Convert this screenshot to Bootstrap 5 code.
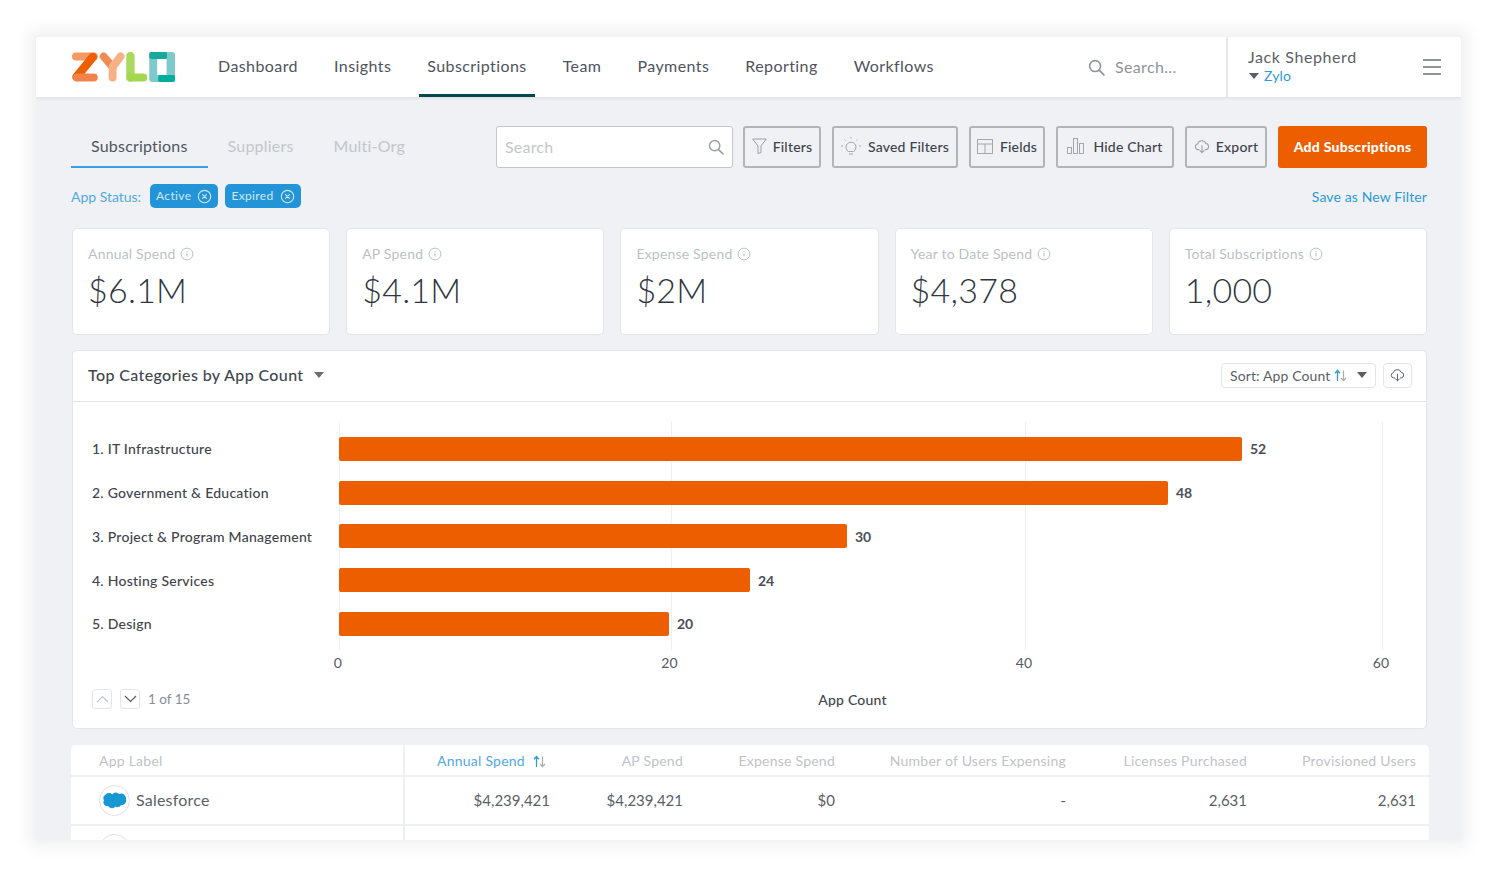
<!DOCTYPE html>
<html lang="en">
<head>
<meta charset="utf-8">
<title>Zylo Subscriptions</title>
<link rel="stylesheet" href="https://cdn.jsdelivr.net/npm/bootstrap@5.3.0/dist/css/bootstrap.min.css">
<style>
html,body{height:876px;overflow:hidden}
body{background:#fff;font-family:Lato,"Liberation Sans",sans-serif;color:#4a4f57;padding:37px 36px 36px;letter-spacing:.2px}
.appwin{height:803px;background:#eff1f5;box-shadow:0 0 14px 10px rgba(0,0,0,.045),0 0 4px 2px rgba(0,0,0,.02);border-radius:3px;overflow:hidden}
.topbar{height:61px;background:#fff;border-bottom:1px solid #e2e4e7;box-shadow:0 1px 2px rgba(0,0,0,.06);padding:0}
.brandmark{width:103px;height:30px;margin-left:36px;margin-right:35px;display:block}
.topnav{gap:20px}
.topnav .nav-link{font-size:16px;color:#4f545b;padding:0 8px;height:60px;line-height:57px;border-bottom:3px solid transparent;letter-spacing:.42px}
.topnav .nav-link.active{color:#4f545b;border-bottom-color:#03474f}
.topsearch{margin-left:auto;color:#8f9398;font-size:16px;gap:10px;width:138px;letter-spacing:.35px}
.usermenu{height:60px;width:235px;border-left:2px solid #e6e7ea;padding:0 20px 2px 20px}
.username{font-size:16px;line-height:20px;margin-bottom:0;color:#5b5f66;letter-spacing:.6px}
.userorg{font-size:14px;line-height:18px;color:#2e9ad9;gap:5px;padding-left:1px}
.orgcaret{color:#5a5f66}
.menuicon{flex:none;margin-top:2px}
.contentpad{padding:28px 34px 0 35px}
.subtabs .nav-link{font-size:16px;color:#c3c6ca;padding:0 20px;height:42px;line-height:40px;letter-spacing:.2px}
.subtabs .nav-link.active{color:#50565e;border-bottom:2px solid #3a9fdc;background:none}
.searchbox{width:237px;height:42px;margin-left:auto;background:#fff;border:1px solid #c4c6ca;border-radius:3px;padding:0 8px;color:#c3c6ca;font-size:16px;margin-right:10px}
.searchglyph{color:#9b9ea3}
.toolbtn{height:42px;border:2px solid #b2b4b8;border-radius:3px;background:transparent;color:#3e434b;font-size:14px;font-weight:500;padding:0 0 2px;letter-spacing:.2px;display:flex;align-items:center;justify-content:center;gap:6px;margin-right:11px}
.btn-filters{width:78px}
.btn-saved{width:126px;gap:7px}
.btn-fields{width:76px;gap:7px}
.btn-hide{width:118px;gap:9px}
.btn-export{width:82px}
.cloudgrey{color:#9c9fa4}
.addbtn{height:42px;width:149px;background:#ec5e00;border:0;border-radius:3px;color:#fff;font-size:14px;font-weight:900;padding:0 0 2px;letter-spacing:.25px}
.filterline{height:24px;margin-top:16px;font-size:14px}
.filterlabel{color:#52a9e1;margin-right:9px;letter-spacing:-.02px}
.filterchip{background:#2394d8;color:#cfe8f7;font-size:12px;font-weight:400;height:24px;border-radius:5px;padding:0 6px;display:inline-flex;align-items:center;gap:6px;margin-right:7px;letter-spacing:.35px}
.savelink{margin-left:auto;color:#2e9ad9;text-decoration:none;font-size:14px;letter-spacing:.12px}
.statsrow{gap:16px;margin-top:20px;padding-left:1px}
.statcard{width:258.2px;height:107px;border:1px solid #e3e5e9;border-radius:5px;padding:15px 15px 0}
.statlabel{font-size:14px;color:#bcbfc4;line-height:20px;display:flex;align-items:center;gap:5px;letter-spacing:.2px}
.statvalue{font-size:34px;font-weight:300;line-height:46px;color:#2f3641;margin-top:3px;letter-spacing:.25px}
.chartpanel{height:379px;margin:15px 0 16px 1px;border:1px solid #e3e5e9;border-radius:5px;background:#fff}
.panelhead{height:51px;padding:0 14px 2px 15px;background:#fff;border-bottom:1px solid #e3e5e9}
.paneltitle{font-size:16px;color:#41464e;font-weight:500;letter-spacing:.38px}
.titlecaret{color:#6a6e74;margin-left:10px}
.sortpick{height:25px;width:155px;border:1px solid #e2e4e7;border-radius:4px;font-size:14px;color:#5a5f66;padding:0 8px;margin-left:auto;margin-right:7px;background:#fff;letter-spacing:.12px}
.sortcaret{color:#5a5f66}
.cloudpick{height:25px;width:29px;border:1px solid #e2e4e7;border-radius:4px;color:#5f6369}
.plotwrap{position:relative;margin:19px 0 0 266px;width:1027px;padding-top:6px;height:229px}
.gridline{position:absolute;top:0;bottom:0;width:1px;background:#eef0f2}
.barline{height:43.75px;position:relative;margin-left:-266px}
.barname{width:266px;padding-left:19px;font-size:14px;font-weight:500;color:#3f444c;letter-spacing:.25px}
.barfill{height:24px;background:#ec5e00;border-radius:2px;position:relative}
.barnum{font-size:14px;font-weight:700;color:#4a4f57;margin-left:8px;letter-spacing:0}
.ticksrow{position:relative;margin-left:265px;width:1027px;height:26px}
.ticktext{position:absolute;top:2px;transform:translateX(-50%);font-size:14px;color:#54595f}
.chartfoot{margin-top:11px;height:24px}
.pagerside{width:266px;padding-left:19px;gap:8px;font-size:13.5px;color:#8a8e94;letter-spacing:0}
.pagerbtn{width:20px;height:20px;border:1px solid #e3e5e8;border-radius:3px}
.axisname{width:1027px;text-align:center;font-size:14px;font-weight:500;color:#41464e}
.tablewrap{width:1358px;background:#fff;border-radius:5px 5px 0 0}
.datatable{table-layout:fixed;width:1358px;margin:0;--bs-table-bg:transparent}
.datatable th{height:31px;padding:0 13px;font-size:14px;font-weight:400;color:#c0c3c8;text-align:right;vertical-align:middle;border-bottom:2px solid #eef0f2;white-space:nowrap;letter-spacing:.24px}
.datatable td{height:49px;padding:0 13px 1px;font-size:15px;color:#5a5f66;text-align:right;vertical-align:middle;border-bottom:2px solid #eef0f2;white-space:nowrap;letter-spacing:0}
.datatable .namecol{text-align:left;border-right:2px solid #eef0f2;padding-left:28px}
.datatable td.namecol{font-size:16px;letter-spacing:.2px}
.datatable th.sortcol{color:#52a9e1;text-align:left;padding-left:32px}
.namewrap{gap:6px}
.applogo{width:31px;height:31px;border:1px solid #dfe1e4;border-radius:50%}
</style>
</head>
<body>
<svg width="0" height="0" class="d-none" aria-hidden="true">
  <symbol id="i-info" viewBox="0 0 14 14"><circle cx="7" cy="7" r="5.9" fill="none" stroke="currentColor" stroke-width="1"/><path d="M7 6.2v3.4M7 4.2v1" stroke="currentColor" stroke-width="1.1" fill="none"/></symbol>
  <symbol id="i-cloud" viewBox="0 0 18 16"><path d="M5.5 11.5H4.4A3.2 3.2 0 0 1 4 5.2 4.9 4.9 0 0 1 13.3 4.6 3.5 3.5 0 0 1 13.6 11.5H12.5" fill="none" stroke="currentColor" stroke-width="1.2" stroke-linecap="round"/><path d="M9 7v8M6.6 12.6 9 15l2.4-2.4" fill="none" stroke="currentColor" stroke-width="1.2" stroke-linecap="round" stroke-linejoin="round"/></symbol>
  <symbol id="i-search" viewBox="0 0 18 18"><circle cx="7.5" cy="7.5" r="5.8" fill="none" stroke="currentColor" stroke-width="1.7"/><path d="m11.8 11.8 5 5" stroke="currentColor" stroke-width="1.9" stroke-linecap="round"/></symbol>
  <symbol id="i-x" viewBox="0 0 16 16"><circle cx="8" cy="8" r="6.6" fill="none" stroke="currentColor" stroke-width="1.2"/><path d="m5.9 5.9 4.2 4.2m0-4.2-4.2 4.2" stroke="currentColor" stroke-width="1.2" stroke-linecap="round"/></symbol>
  <symbol id="i-caret" viewBox="0 0 10 6"><path d="M0 0h10L5 6z" fill="currentColor"/></symbol>
  <symbol id="i-sort" viewBox="0 0 13 13"><path d="M3.5 12V2M1 4.2 3.5 1.5 6 4.2" fill="none" stroke="#2e9ad9" stroke-width="1.3"/><path d="M9.5 1.5v10M7 9 9.5 11.6 12 9" fill="none" stroke="#a9adb2" stroke-width="1.2"/></symbol>
</svg>

<div class="appwin">
  <nav class="navbar navbar-expand topbar flex-nowrap align-items-center">
    <svg class="brandmark" viewBox="0 0 104 30" preserveAspectRatio="none" role="img" aria-label="Zylo logo">
      <path d="M4 4.500H22" stroke="#f49a62" stroke-width="8" stroke-linecap="round" fill="none"/>
      <path d="M21 5 4.500 25" stroke="#ed5f00" stroke-width="8.500" stroke-linecap="round" fill="none"/>
      <path d="M5 25.500H22" stroke="#f2824a" stroke-width="8" stroke-linecap="round" fill="none"/>
      <path d="M32 4.500 41 15" stroke="#f08a56" stroke-width="8" stroke-linecap="round" fill="none"/>
      <path d="M49 4.500 41 15V25.500" stroke="#f8b184" stroke-width="8" stroke-linecap="round" stroke-linejoin="round" fill="none"/>
      <path d="M59 4V25.500" stroke="#abd95c" stroke-width="8.500" stroke-linecap="round" fill="none"/>
      <path d="M59 25.500H72" stroke="#a3d74e" stroke-width="8" stroke-linecap="round" fill="none"/>
      <rect x="78" y="0" width="26" height="30" rx="3" fill="#7ecaca"/>
      <rect x="78" y="0" width="18" height="7" rx="2" fill="#16a99c"/>
      <rect x="87" y="23" width="17" height="7" rx="2" fill="#00ae9d"/>
      <rect x="86" y="7" width="9.500" height="16" fill="#fff"/>
    </svg>
    <div class="navbar-nav topnav">
      <a class="nav-link" href="#">Dashboard</a>
      <a class="nav-link" href="#">Insights</a>
      <a class="nav-link active" href="#">Subscriptions</a>
      <a class="nav-link" href="#">Team</a>
      <a class="nav-link" href="#">Payments</a>
      <a class="nav-link" href="#">Reporting</a>
      <a class="nav-link" href="#">Workflows</a>
    </div>
    <div class="d-flex align-items-center topsearch">
      <svg width="17" height="17"><use href="#i-search"/></svg><span>Search...</span>
    </div>
    <div class="d-flex align-items-center usermenu">
      <div class="flex-grow-1">
        <div class="username">Jack Shepherd</div>
        <div class="userorg d-flex align-items-center"><svg width="10" height="6" class="orgcaret"><use href="#i-caret"/></svg><span>Zylo</span></div>
      </div>
      <svg class="menuicon" width="18" height="16" viewBox="0 0 18 16" aria-hidden="true"><path d="M0 1h18M0 8h18M0 15h18" stroke="#6c7076" stroke-width="1.700"/></svg>
    </div>
  </nav>

  <div class="contentpad">
    <div class="d-flex align-items-start">
      <ul class="nav subtabs">
        <li class="nav-item"><a class="nav-link active" href="#">Subscriptions</a></li>
        <li class="nav-item"><a class="nav-link" href="#">Suppliers</a></li>
        <li class="nav-item"><a class="nav-link" href="#">Multi-Org</a></li>
      </ul>
      <div class="d-flex align-items-center searchbox">
        <span class="flex-grow-1">Search</span>
        <svg width="16" height="16" class="searchglyph"><use href="#i-search"/></svg>
      </div>
      <button class="btn toolbtn btn-filters" type="button"><svg width="15" height="16" viewBox="0 0 15 16" fill="none" stroke="#9c9fa4" stroke-width="1"><path d="M.7 1h13.600L9 8v6.500L6 15.500V8z"/></svg>Filters</button>
      <button class="btn toolbtn btn-saved" type="button"><svg width="20" height="20" viewBox="0 0 20 20" fill="none" stroke="#a4a7ab" stroke-width="1"><path d="M7.500 15.500a5 5 0 1 1 5 0zM8 18h4M10 1v1.500M3.500 3.500l1 1M16.500 3.500l-1 1M0 10h2M18 10h2"/></svg>Saved Filters</button>
      <button class="btn toolbtn btn-fields" type="button"><svg width="16" height="15" viewBox="0 0 16 15" fill="none" stroke="#a4a7ab" stroke-width="1"><rect x=".5" y=".5" width="15" height="14"/><path d="M.5 5h15M8 5v9.500"/></svg>Fields</button>
      <button class="btn toolbtn btn-hide" type="button"><svg width="17" height="16" viewBox="0 0 17 16" fill="none" stroke="#a4a7ab" stroke-width="1"><rect x=".5" y="9.500" width="4" height="6"/><rect x="6.500" y=".5" width="4" height="15"/><rect x="12.500" y="5.500" width="4" height="10"/></svg>Hide Chart</button>
      <button class="btn toolbtn btn-export" type="button"><svg width="16" height="15" class="cloudgrey"><use href="#i-cloud"/></svg>Export</button>
      <button class="btn addbtn" type="button">Add Subscriptions</button>
    </div>

    <div class="d-flex align-items-center filterline">
      <span class="filterlabel">App Status:</span>
      <span class="badge filterchip">Active <svg width="15" height="15"><use href="#i-x"/></svg></span>
      <span class="badge filterchip">Expired <svg width="15" height="15"><use href="#i-x"/></svg></span>
      <a class="savelink" href="#">Save as New Filter</a>
    </div>

    <div class="d-flex statsrow">
      <div class="card statcard"><div class="statlabel">Annual Spend <svg width="14" height="14"><use href="#i-info"/></svg></div><div class="statvalue">$6.1M</div></div>
      <div class="card statcard"><div class="statlabel">AP Spend <svg width="14" height="14"><use href="#i-info"/></svg></div><div class="statvalue">$4.1M</div></div>
      <div class="card statcard"><div class="statlabel">Expense Spend <svg width="14" height="14"><use href="#i-info"/></svg></div><div class="statvalue">$2M</div></div>
      <div class="card statcard"><div class="statlabel">Year to Date Spend <svg width="14" height="14"><use href="#i-info"/></svg></div><div class="statvalue">$4,378</div></div>
      <div class="card statcard"><div class="statlabel">Total Subscriptions <svg width="14" height="14"><use href="#i-info"/></svg></div><div class="statvalue">1,000</div></div>
    </div>

    <div class="card chartpanel">
      <div class="card-header d-flex align-items-center panelhead">
        <span class="paneltitle">Top Categories by App Count</span>
        <svg width="10" height="6" class="titlecaret"><use href="#i-caret"/></svg>
        <div class="d-flex align-items-center sortpick"><span>Sort: App Count</span><svg width="13" height="13" class="ms-1"><use href="#i-sort"/></svg><svg width="10" height="6" class="ms-auto sortcaret"><use href="#i-caret"/></svg></div>
        <div class="d-flex align-items-center justify-content-center cloudpick"><svg width="15" height="14"><use href="#i-cloud"/></svg></div>
      </div>
      <div class="plotwrap">
        <i class="gridline" style="left:0"></i>
        <i class="gridline" style="left:331.5px"></i>
        <i class="gridline" style="left:686px"></i>
        <i class="gridline" style="left:1043px"></i>
        <div class="d-flex align-items-center barline"><span class="barname">1. IT Infrastructure</span><span class="barfill" style="width:903px"></span><span class="barnum">52</span></div>
        <div class="d-flex align-items-center barline"><span class="barname">2. Government &amp; Education</span><span class="barfill" style="width:829px"></span><span class="barnum">48</span></div>
        <div class="d-flex align-items-center barline"><span class="barname">3. Project &amp; Program Management</span><span class="barfill" style="width:508px"></span><span class="barnum">30</span></div>
        <div class="d-flex align-items-center barline"><span class="barname">4. Hosting Services</span><span class="barfill" style="width:411px"></span><span class="barnum">24</span></div>
        <div class="d-flex align-items-center barline"><span class="barname">5. Design</span><span class="barfill" style="width:330px"></span><span class="barnum">20</span></div>
      </div>
      <div class="ticksrow">
        <span class="ticktext" style="left:0">0</span>
        <span class="ticktext" style="left:331.5px">20</span>
        <span class="ticktext" style="left:686px">40</span>
        <span class="ticktext" style="left:1043px">60</span>
      </div>
      <div class="d-flex align-items-center chartfoot">
        <div class="d-flex align-items-center pagerside">
          <span class="d-flex align-items-center justify-content-center pagerbtn"><svg width="13" height="8" viewBox="0 0 13 8" fill="none" stroke="#c4c7ca" stroke-width="1.100"><path d="M1 7 6.500 1.500 12 7"/></svg></span>
          <span class="d-flex align-items-center justify-content-center pagerbtn"><svg width="13" height="8" viewBox="0 0 13 8" fill="none" stroke="#5c6066" stroke-width="1.200"><path d="M1 1l5.500 5.500L12 1"/></svg></span>
          <span>1 of 15</span>
        </div>
        <div class="axisname">App Count</div>
      </div>
    </div>

    <div class="tablewrap">
      <table class="table datatable">
        <colgroup><col style="width:333px"><col style="width:159px"><col style="width:133px"><col style="width:152px"><col style="width:231px"><col style="width:181px"><col style="width:169px"></colgroup>
        <thead>
          <tr>
            <th class="namecol">App Label</th>
            <th class="sortcol">Annual Spend <svg width="13" height="13" class="ms-1"><use href="#i-sort"/></svg></th>
            <th>AP Spend</th><th>Expense Spend</th><th>Number of Users Expensing</th><th>Licenses Purchased</th><th>Provisioned Users</th>
          </tr>
        </thead>
        <tbody>
          <tr>
            <td class="namecol"><div class="d-flex align-items-center namewrap"><span class="d-flex align-items-center justify-content-center applogo"><svg width="25" height="17" viewBox="0 0 25 17" aria-hidden="true"><path d="M10.300 2.400A4.300 4.300 0 0 1 17.100 2.100 4.800 4.800 0 0 1 24 6.900 4.900 4.900 0 0 1 18.800 13.200 3.800 3.800 0 0 1 13.500 14.600 4.600 4.600 0 0 1 6.100 14 3.800 3.800 0 0 1 2 8.300 4 4 0 0 1 3.800 2.400 4.400 4.400 0 0 1 10.300 2.400Z" fill="#1798d5"/></svg></span><span>Salesforce</span></div></td>
            <td>$4,239,421</td><td>$4,239,421</td><td>$0</td><td>-</td><td>2,631</td><td>2,631</td>
          </tr>
          <tr>
            <td class="namecol"><span class="d-block applogo"></span></td>
            <td></td><td></td><td></td><td></td><td></td><td></td>
          </tr>
        </tbody>
      </table>
    </div>
  </div>
</div>
</body>
</html>
